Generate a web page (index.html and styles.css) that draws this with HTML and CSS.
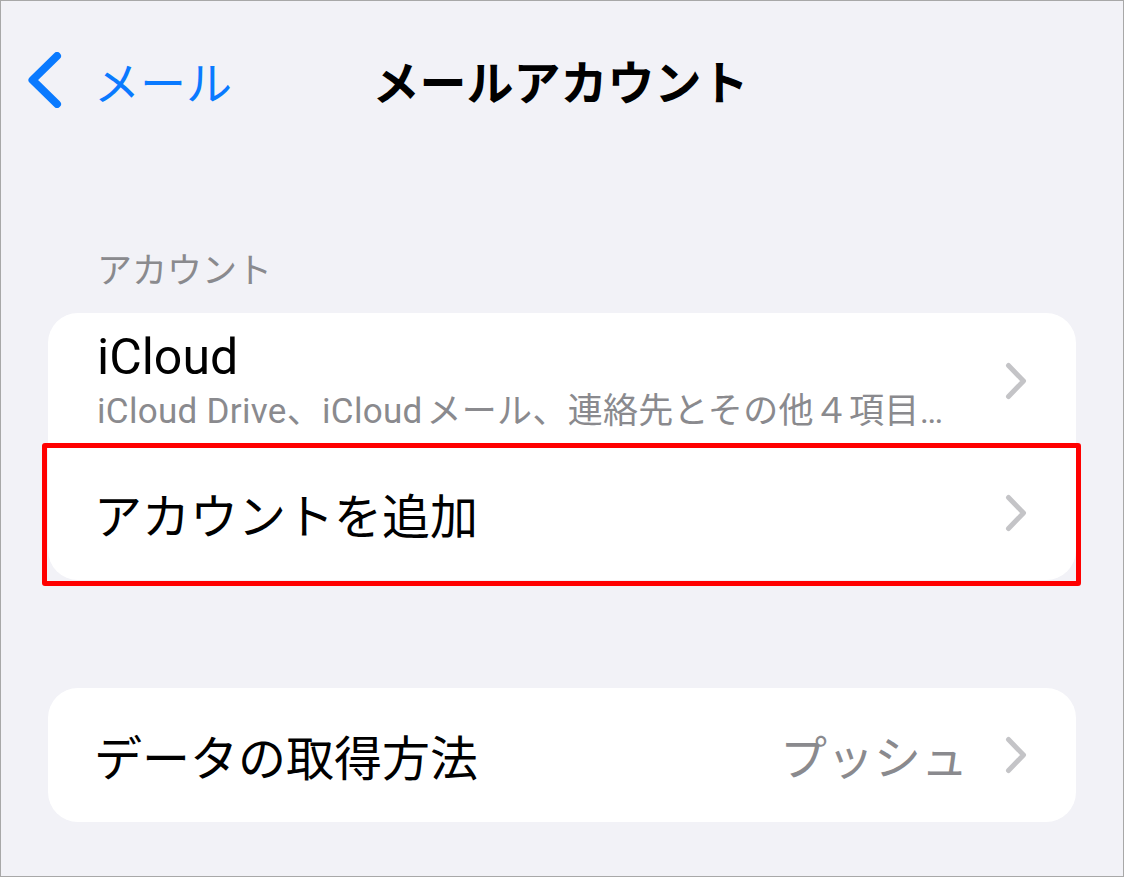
FILE: index.html
```html
<!DOCTYPE html>
<html lang="ja">
<head>
<meta charset="utf-8">
<title>メールアカウント</title>
<link rel="stylesheet" href="styles.css">
</head>
<body>
<div class="screen">
  <header class="nav">
    <div class="back">
      <svg class="back-chevron" width="34" height="56" viewBox="0 0 34 56"><path d="M29 4 L4.5 28 L29 52" fill="none" stroke="#0a7aff" stroke-width="8" stroke-linecap="round" stroke-linejoin="round"/></svg>
      <span class="back-label">メール</span>
    </div>
    <h1 class="title">メールアカウント</h1>
    <div class="spacer"></div>
  </header>

  <div class="section-label">アカウント</div>
  <section class="card">
    <div class="row row-double">
      <div class="row-text">
        <div class="row-title latin">iCloud</div>
        <div class="row-sub">iCloud Drive、iCloud&#8202;メール、連絡先とその他４項目…</div>
      </div>
      <svg class="chev chev-up" width="22" height="38" viewBox="0 0 22 38"><path d="M3.5 3.5 L18.5 19 L3.5 34.5" fill="none" stroke="#c4c4c7" stroke-width="5" stroke-linecap="round" stroke-linejoin="round"/></svg>
    </div>
    <div class="row row-single highlighted">
      <div class="row-title cjk">アカウントを追加</div>
      <svg class="chev" width="22" height="38" viewBox="0 0 22 38"><path d="M3.5 3.5 L18.5 19 L3.5 34.5" fill="none" stroke="#c4c4c7" stroke-width="5" stroke-linecap="round" stroke-linejoin="round"/></svg>
      <div class="mark"></div>
    </div>
  </section>

  <section class="card card-second">
    <div class="row row-single">
      <div class="row-title cjk">データの取得方法</div>
      <div class="row-value">プッシュ</div>
      <svg class="chev" width="22" height="38" viewBox="0 0 22 38"><path d="M3.5 3.5 L18.5 19 L3.5 34.5" fill="none" stroke="#c4c4c7" stroke-width="5" stroke-linecap="round" stroke-linejoin="round"/></svg>
    </div>
  </section>
</div>
</body>
</html>
```

FILE: styles.css
```css
* { box-sizing: border-box; }
html, body { margin: 0; padding: 0; }
body {
  font-family: "Roboto", "Noto Sans CJK JP", sans-serif;
  background: #ffffff;
}
.screen {
  width: 1124px;
  height: 877px;
  border: 1px solid #a8a8a8;
  background: #f2f2f7;
  padding: 0 47px;
  overflow: hidden;
}
.nav {
  height: 158px;
  margin: 0 -47px;
  display: grid;
  grid-template-columns: 1fr auto 1fr;
  align-items: center;
}
.back {
  display: flex;
  align-items: center;
  padding-left: 27px;
  gap: 32px;
}
.back-chevron { display: block; }
.back-label {
  color: #0a7aff;
  font-size: 46px;
  line-height: 56px;
  font-family: "Noto Sans CJK JP", sans-serif;
}
.title {
  margin: 0 0 0 -3px;
  font-size: 47px;
  line-height: 56px;
  font-weight: 700;
  color: #000;
  font-family: "Noto Sans CJK JP", sans-serif;
}
.section-label {
  margin: 87px 0 23px 49px;
  font-size: 35px;
  line-height: 44px;
  color: #8a8a8e;
  font-family: "Noto Sans CJK JP", sans-serif;
}
.card {
  background: #ffffff;
  border-radius: 30px;
}
.card-second { margin-top: 108px; }
.row {
  display: flex;
  align-items: center;
  padding: 0 49px 0 49px;
  position: relative;
}
.row-double {
  height: 133px;
  padding-top: 9px;
}
.row-single { height: 134px; }
.row-text { flex: 1; min-width: 0; }
.row-single .row-title { flex: 1; }
.row-title {
  font-size: 48px;
  line-height: 56px;
  color: #000;
  font-family: "Noto Sans CJK JP", sans-serif;
}
.row-title.cjk { margin-left: -3px; }
.row-title.latin {
  font-family: "Roboto", sans-serif;
  font-size: 50px;
}
.row-sub {
  font-size: 35px;
  line-height: 54px;
  color: #8a8a8e;
  white-space: nowrap;
  letter-spacing: 0.3px;
}
.row-value {
  font-size: 47px;
  line-height: 56px;
  color: #8a8a8e;
  font-family: "Noto Sans CJK JP", sans-serif;
  margin-right: 37px;
}
.chev { display: block; flex: none; }
.chev-up { margin-top: -6px; }
.mark {
  position: absolute;
  left: -6px;
  right: -5px;
  top: -3px;
  bottom: -6px;
  border: 5px solid #ff0000;
  border-radius: 3px;
}
```
